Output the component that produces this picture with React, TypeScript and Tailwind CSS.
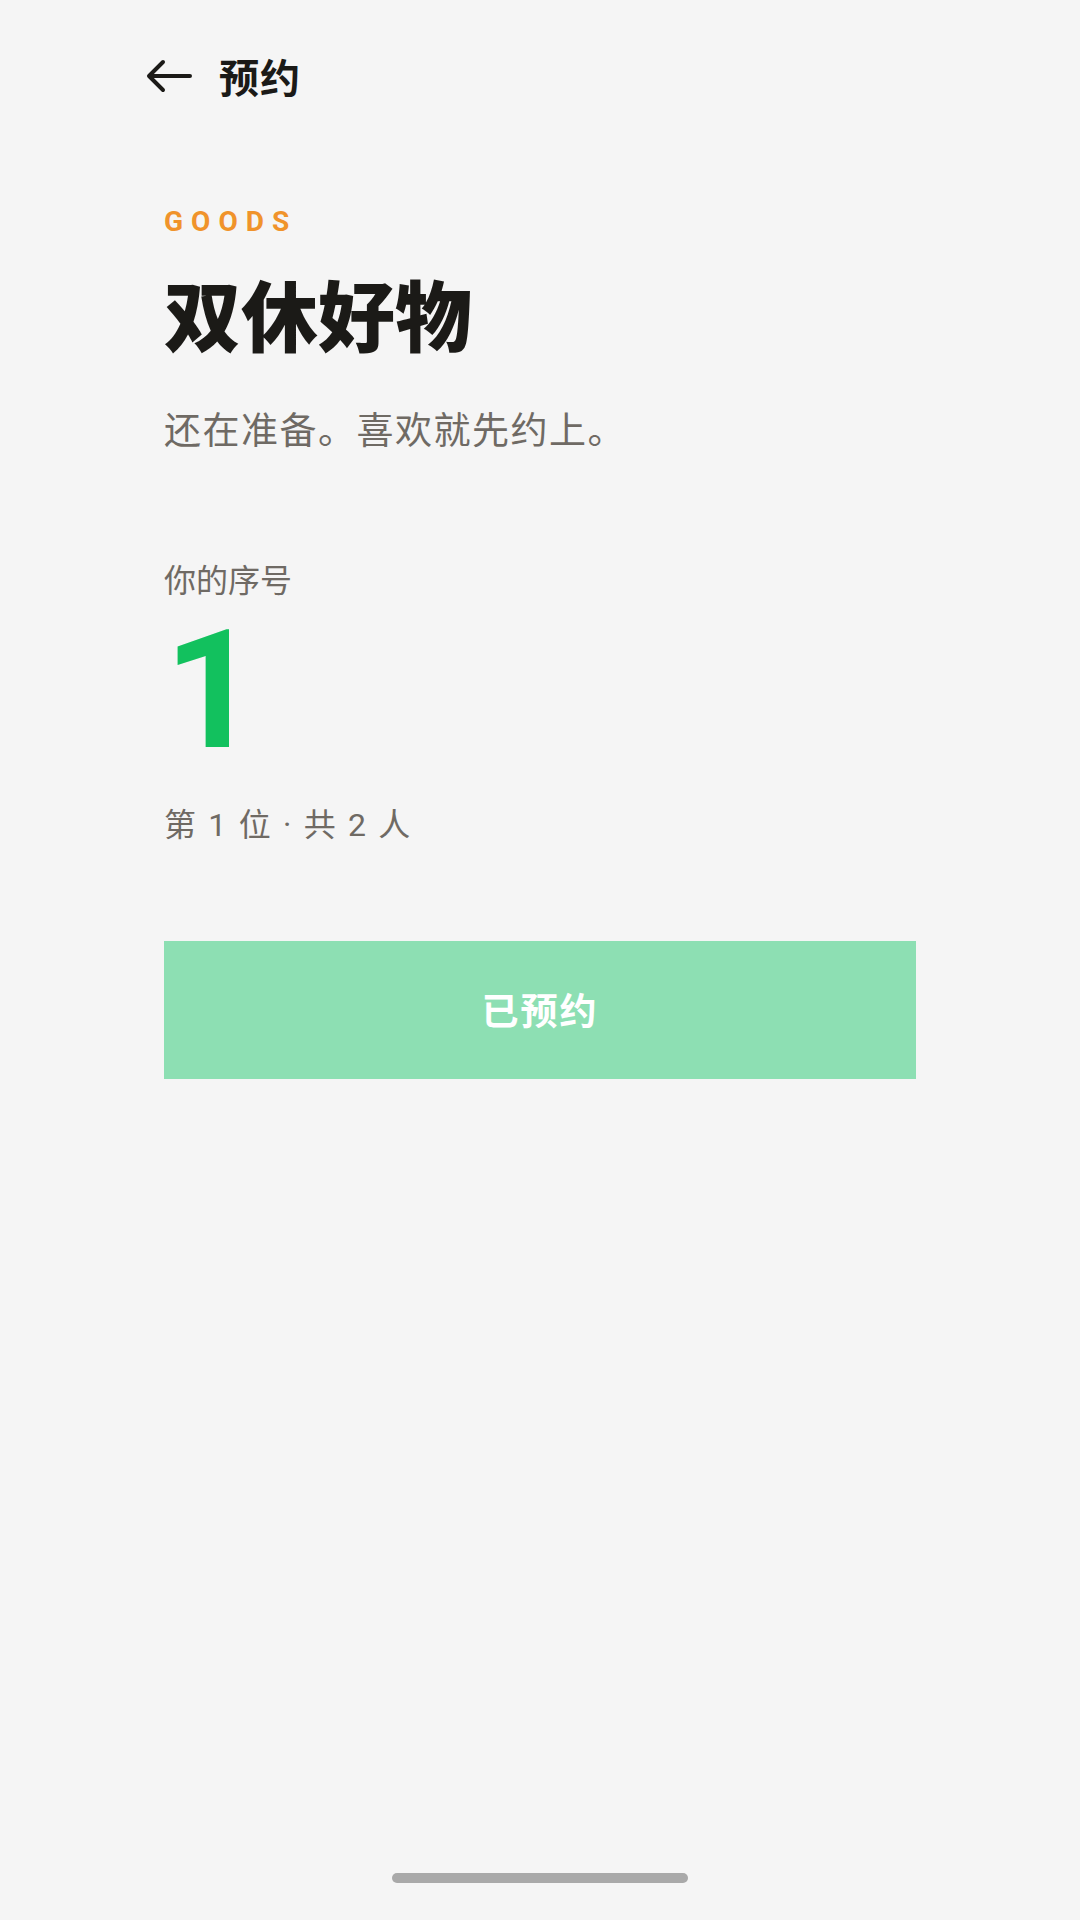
import React from "react";

const cjk = { fontFamily: '"Noto Sans CJK SC", "Noto Sans", sans-serif' };
const latin = { fontFamily: 'Roboto, "Noto Sans CJK SC", sans-serif' };

function BackArrow() {
  return (
    <svg width="46" height="34" viewBox="0 0 46 34" fill="none">
      <path
        d="M44 17H4M17 3L3 17l14 14"
        stroke="#1b1a17"
        strokeWidth="4"
        strokeLinecap="round"
        strokeLinejoin="round"
      />
    </svg>
  );
}

export default function App() {
  return (
    <div style={cjk} className="flex h-[1920px] w-[1080px] flex-col bg-[#f5f5f5]">
      {/* 顶部栏 */}
      <div className="mt-[40px] flex h-[72px] items-center pl-[146px]">
        <BackArrow />
        <span className="ml-[27px] text-[40px] leading-[40px] font-bold tracking-[1px] text-[#1b1a17]">预约</span>
      </div>

      <div className="flex flex-col px-[164px]">
        <div
          style={latin}
          className="mt-[96px] text-[28px] leading-[28px] font-bold tracking-[8px] text-[#f0932b]"
        >
          GOODS
        </div>
        <h1 className="mt-[38px] text-[77px] leading-[77px] font-black text-[#1b1a17]">双休好物</h1>
        <p className="mt-[59px] text-[37px] leading-[37px] tracking-[1.5px] text-[#6f6a64]">
          还在准备。喜欢就先约上。
        </p>

        {/* 序号 */}
        <div className="mt-[115px] text-[32px] leading-[32px] text-[#6f6a64]">你的序号</div>
        <div style={latin} className="mt-[14px] text-[166px] leading-[166px] font-bold text-[#12c15e]">
          1
        </div>
        <div style={latin} className="mt-[35px] text-[32px] leading-[32px] tracking-[2.2px] text-[#6f6a64]">
          第 1 位 · 共 2 人
        </div>

        <button className="mt-[100px] flex h-[138px] w-full items-center justify-center bg-[#8ddfb3] text-[37px] font-bold tracking-[2px] text-white">
          已预约
        </button>
      </div>

      {/* 底部指示条 */}
      <div className="mx-auto mt-auto mb-[37px] h-[10px] w-[296px] rounded-full bg-[#a9a9a9]" />
    </div>
  );
}
